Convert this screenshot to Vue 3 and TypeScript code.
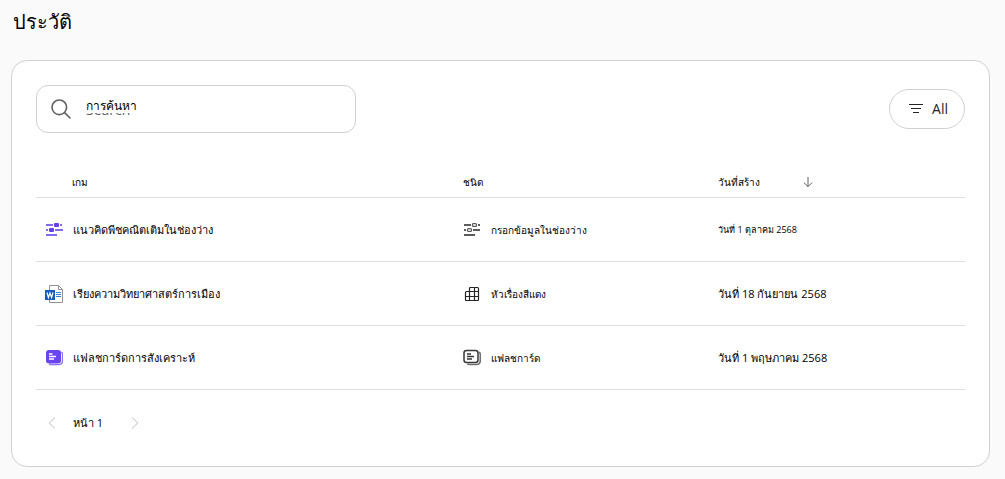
<script setup lang="ts">
import { ref } from 'vue'

type Glyph = 'blanks' | 'word' | 'cards' | 'grid'

interface HistoryRow {
  game: string
  gameIcon: Glyph
  kind: string
  kindIcon: Glyph
  created: string
  compact?: boolean
}

const query = ref('')

const rows: HistoryRow[] = [
  { game: 'แนวคิดพีชคณิตเติมในช่องว่าง', gameIcon: 'blanks', kind: 'กรอกข้อมูลในช่องว่าง', kindIcon: 'blanks', created: 'วันที่ 1 ตุลาคม 2568', compact: true },
  { game: 'เรียงความวิทยาศาสตร์การเมือง', gameIcon: 'word', kind: 'หัวเรื่องสีแดง', kindIcon: 'grid', created: 'วันที่ 18 กันยายน 2568' },
  { game: 'แฟลชการ์ดการสังเคราะห์', gameIcon: 'cards', kind: 'แฟลชการ์ด', kindIcon: 'cards', created: 'วันที่ 1 พฤษภาคม 2568' },
]
</script>

<template>
  <main class="page">
    <h1 class="title">ประวัติ</h1>

    <section class="card">
      <div class="toolbar">
        <div class="search">
          <svg class="search-icon" viewBox="0 0 20 20" aria-hidden="true">
            <circle cx="8.3" cy="8.3" r="7.3" />
            <path d="M13.6 13.6 19 19" />
          </svg>
          <div class="field">
            <input id="history-search" v-model="query" type="text" placeholder="Search" />
            <label v-show="!query" for="history-search">การค้นหา</label>
          </div>
        </div>
        <button class="filter" type="button">
          <svg viewBox="0 0 14 10" aria-hidden="true">
            <path d="M0 .5h14M2 4.5h10M4 8.5h6" />
          </svg>
          <span>All</span>
        </button>
      </div>

      <table class="history">
        <colgroup>
          <col class="col-game" />
          <col class="col-kind" />
          <col class="col-date" />
        </colgroup>
        <thead>
          <tr>
            <th class="game" scope="col">เกม</th>
            <th scope="col">ชนิด</th>
            <th class="date" scope="col">
              <button class="sort" type="button">
                <span>วันที่สร้าง</span>
                <svg viewBox="0 0 10 12" aria-hidden="true">
                  <path d="M5 1v9.5M.8 6.5 5 10.7l4.2-4.2" />
                </svg>
              </button>
            </th>
          </tr>
        </thead>
        <tbody>
          <tr v-for="row in rows" :key="row.game">
            <td class="game-cell">
              <div class="entry">
                <svg v-if="row.gameIcon === 'blanks'" class="icon" viewBox="0 0 18 18" aria-hidden="true">
                  <g fill="#8169f0">
                    <rect x="1" y="3" width="7" height="2" />
                    <rect x="15" y="3" width="2" height="2" />
                    <rect x="1" y="8" width="2" height="2" />
                    <rect x="10" y="8" width="8" height="2" />
                    <rect x="1" y="13" width="11" height="2" />
                  </g>
                  <rect x="9" y="2" width="5" height="4" rx="1" fill="#6b3fea" />
                  <rect x="4" y="7" width="5" height="4" rx="1" fill="#6242e8" />
                </svg>
                <svg v-else-if="row.gameIcon === 'word'" class="icon" viewBox="0 0 18 18" aria-hidden="true">
                  <path d="M4.5.5h9l4 4v13h-13z" fill="#fff" stroke="#929292" />
                  <path d="M13.5.5v4h4" fill="none" stroke="#929292" />
                  <path d="M11 7.5h5M11 9.5h5M11 11.5h5" fill="none" stroke="#2f7fd6" />
                  <rect y="5" width="10" height="10" fill="#185abd" />
                  <path d="m2 7.500 1.400 5L5 8l1.600 4.500 1.400-5" fill="none" stroke="#fff" stroke-width="1.200" />
                </svg>
                <svg v-else class="icon" viewBox="0 0 18 18" aria-hidden="true">
                  <path d="M16.500 3q1 .9 1 2.200v6.300q0 4.200-4.200 4.200H6.500q-1.600 0-2.200-.7" fill="none" stroke="#8c70f0" stroke-width="1.300" />
                  <rect x="1" y="1" width="15" height="13.500" rx="3" fill="#6845ec" />
                  <path d="M4 5h3.500M4 7.500h7M4 10h5" fill="none" stroke="#fff" stroke-width="1.300" />
                </svg>
                <span>{{ row.game }}</span>
              </div>
            </td>
            <td>
              <div class="entry kind">
                <svg v-if="row.kindIcon === 'blanks'" class="icon" viewBox="0 0 18 18" aria-hidden="true">
                  <g fill="#5c5c5c">
                    <rect x="1" y="3" width="7" height="2" />
                    <rect x="15" y="3" width="2" height="2" />
                    <rect x="1" y="8" width="2" height="2" />
                    <rect x="10" y="8" width="7" height="2" />
                    <rect x="1" y="13" width="11" height="2" />
                  </g>
                  <g fill="#ddd" stroke="#5c5c5c" stroke-width="1.200">
                    <rect x="9.500" y="2.500" width="4" height="3" rx="1" />
                    <rect x="4.500" y="7.500" width="4" height="3" rx="1" />
                  </g>
                </svg>
                <svg v-else-if="row.kindIcon === 'grid'" class="icon" viewBox="0 0 18 18" aria-hidden="true">
                  <path
                    d="M6.500 15.500h-3q-1 0-1-1v-7q0-1 1-1h3v-3q0-1 1-1h7q1 0 1 1v11q0 1-1 1zM6.500 6.500v9M11.500 2.500v13M6.500 6.500h9M2.500 11.500h13"
                    fill="none"
                    stroke="#242424"
                    stroke-width="1.200"
                  />
                </svg>
                <svg v-else class="icon" viewBox="0 0 18 18" aria-hidden="true">
                  <path d="M16 3.200q1.300.7 1.300 2v6.300q0 4-4 4H6.500q-1.600 0-2.200-.8" fill="none" stroke="#707070" stroke-width="1.600" />
                  <rect x="1" y="1.500" width="14" height="12" rx="2.500" fill="#fff" stroke="#383838" stroke-width="1.500" />
                  <path d="M4 5h4M4 7.500h7M4 10h5" fill="none" stroke="#383838" stroke-width="1.300" />
                </svg>
                <span>{{ row.kind }}</span>
              </div>
            </td>
            <td class="date" :class="{ compact: row.compact }">{{ row.created }}</td>
          </tr>
        </tbody>
      </table>

      <nav class="pager" aria-label="หน้า">
        <button type="button" aria-label="ก่อนหน้า">
          <svg viewBox="0 0 8 12" aria-hidden="true"><path d="M7 .5 1.200 6 7 11.500" /></svg>
        </button>
        <span class="page-number">หน้า 1</span>
        <button type="button" aria-label="ถัดไป">
          <svg viewBox="0 0 8 12" aria-hidden="true"><path d="M1 .5 6.800 6 1 11.500" /></svg>
        </button>
      </nav>
    </section>
  </main>
</template>

<style>
body {
  background: #fafafa;
}
</style>

<style scoped>
.page {
  box-sizing: border-box;
  min-height: 100vh;
  padding: 6px 15px 12px 11px;
  color: #000;
  font: 11px/16px "Open Sans", "Liberation Sans", sans-serif;
}

.title {
  margin: 0 2px 22px;
  font-size: 20px;
  font-weight: 400;
  line-height: 32px;
}

.card {
  padding: 24px 24px 34px;
  background: #fff;
  border: 1px solid #d1d1d1;
  border-radius: 16px;
}

.toolbar {
  display: flex;
  align-items: center;
  justify-content: space-between;
}

.search {
  box-sizing: border-box;
  display: flex;
  align-items: center;
  gap: 15px;
  width: 320px;
  height: 48px;
  padding: 0 14px;
  border: 1px solid #d1d1d1;
  border-radius: 12px;
}

.search-icon {
  flex: none;
  width: 20px;
  height: 20px;
  fill: none;
  stroke: #616161;
  stroke-width: 1.6;
  stroke-linecap: round;
}

.field {
  position: relative;
  flex: 1;
}

.field input {
  box-sizing: border-box;
  display: block;
  width: 100%;
  padding: 2px 0 0;
  border: 0;
  outline: 0;
  background: none;
  color: #242424;
  font: 14px/24px "Open Sans", sans-serif;
}

.field input::placeholder {
  color: #616161;
  opacity: 1;
}

.field label {
  position: absolute;
  top: 1px;
  left: 0;
  height: 16px;
  padding-right: 8px;
  background: #fff;
  font-size: 12px;
  line-height: 18px;
}

button {
  padding: 0;
  border: 0;
  background: none;
  color: inherit;
  font: inherit;
}

button svg {
  fill: none;
}

.filter {
  box-sizing: border-box;
  display: flex;
  align-items: center;
  gap: 9px;
  height: 40px;
  padding: 0 16px 0 19px;
  border: 1px solid #d1d1d1;
  border-radius: 20px;
  color: #242424;
  font: 14px/20px "Open Sans", sans-serif;
}

.filter svg {
  width: 14px;
  height: 10px;
  stroke: #242424;
}

.history {
  width: 100%;
  margin-top: 32px;
  border-collapse: collapse;
  table-layout: fixed;
}

.col-game {
  width: 46%;
}

.col-kind {
  width: 27%;
}

.history th,
.history td {
  padding: 0;
  border-bottom: 1px solid #e0e0e0;
  text-align: left;
}

.history th {
  height: 30px;
  padding-top: 2px;
  font-size: 10px;
  font-weight: 400;
}

.history th.game {
  padding-left: 36px;
}

.history td {
  height: 63px;
}

.history td.game-cell {
  padding-left: 9px;
}

.history .date {
  padding-left: 4px;
}

.history td.compact {
  font-size: 9px;
}

.sort {
  display: flex;
  align-items: center;
  gap: 43px;
}

.sort svg {
  width: 10px;
  height: 12px;
  stroke: #616161;
}

.entry {
  display: flex;
  align-items: center;
  gap: 10px;
}

.kind {
  font-size: 10px;
}

.icon {
  flex: none;
  width: 18px;
  height: 18px;
}

.pager {
  display: flex;
  align-items: center;
  gap: 17px;
  margin-top: 24px;
  padding: 0 12px;
  line-height: 18px;
}

.page-number {
  min-width: 41px;
}

.pager button {
  display: flex;
}

.pager svg {
  width: 8px;
  height: 12px;
  stroke: #bdbdbd;
}
</style>
